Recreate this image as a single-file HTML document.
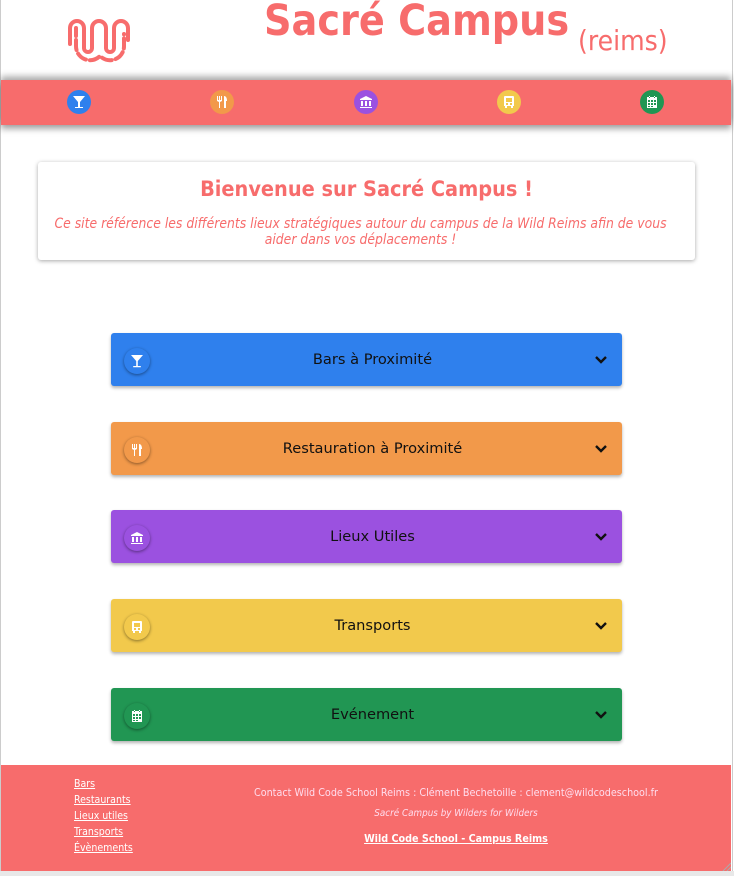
<!DOCTYPE html>
<html><head><meta charset="utf-8">
<style>
html,body{margin:0;padding:0;}
body{width:734px;height:876px;background:#fff;font-family:"DejaVu Sans","Liberation Sans",sans-serif;position:relative;overflow:hidden;}
.frame{position:absolute;left:0;top:0;width:731px;height:871px;border-left:1px solid #ccc;border-right:1px solid #ccc;}
.bottom{position:absolute;left:0;top:871px;width:734px;height:5px;background:#e8e8e8;}
.title{position:absolute;left:264px;top:-3px;font-size:42.5px;font-weight:bold;color:#f76c6c;font-stretch:condensed;white-space:nowrap;}
.reims{position:absolute;left:578px;top:24px;font-size:28px;color:#f76c6c;font-stretch:condensed;}
.nav{position:absolute;left:1px;top:80px;width:730px;height:45px;background:#f76c6c;box-shadow:0 -4px 6px rgba(0,0,0,.3),0 4px 6px rgba(0,0,0,.35);}
.ni{position:absolute;top:10px;width:24px;height:24px;border-radius:50%;}
.ni svg{position:absolute;left:5px;top:5px;}
.card{position:absolute;left:38px;top:162px;width:657px;height:98px;background:#fff;border-radius:3px;box-shadow:0 1px 4px rgba(0,0,0,.35);text-align:center;color:#f76c6c;font-stretch:condensed;}
.card h1{margin:15px 0 0;font-size:21.5px;font-weight:bold;}
.card p{margin:14px 0 0;padding-right:12px;font-size:13.8px;font-style:italic;line-height:16px;}
.acc{position:absolute;left:111px;width:499px;padding-left:12px;height:53px;border-radius:3px;box-shadow:0 2px 3px rgba(0,0,0,.3);font-size:14.6px;color:#111;text-align:center;line-height:54px;}
.acc .ic{position:absolute;left:13px;top:15px;width:26px;height:26px;border-radius:50%;box-shadow:0 1px 3px rgba(0,0,0,.45);}
.acc .ic svg{position:absolute;left:6px;top:6px;}
.acc .chev{position:absolute;right:14px;top:22px;}
.footer{position:absolute;left:1px;top:765px;width:730px;height:106px;background:#f76c6c;color:#fff;font-stretch:condensed;}
.links{position:absolute;left:73px;top:11px;font-size:10.5px;line-height:16px;}
.links a{color:#fff;text-decoration:underline;display:block;}
.fc{position:absolute;left:200px;width:510px;text-align:center;}
</style></head><body>
<div class="frame"></div>
<div class="bottom"></div>
<svg style="position:absolute;left:66px;top:14px" width="68" height="50" viewBox="0 0 68 50" fill="none" stroke="#f76c6c" stroke-width="4" stroke-linecap="round">
<path d="M4 30 V14 a7 7 0 0 1 14 0 V34 a4 4 0 0 0 8 0 V14 a7 7 0 0 1 14 0 V34 a4 4 0 0 0 8 0 V14 a7 7 0 0 1 14 0 V26"/>
<path d="M10 22 V14 M10 26 V32 a14 14 0 0 0 24 10 a14 14 0 0 0 24 -10 V20" stroke-dasharray="10 4"/>
</svg>
<div class="title">Sacré Campus</div>
<div class="reims">(reims)</div>
<div class="nav">
<div class="ni" style="left:66px;background:#2f80ed"><svg width="14" height="14" viewBox="0 0 14 14" fill="#fff"><path d="M1 1h12L8 7v5h3v1H3v-1h3V7z"/></svg></div>
<div class="ni" style="left:209px;background:#f2994a"><svg width="14" height="14" viewBox="0 0 14 14" fill="#fff"><path d="M2 1h1v4h1V1h1v4h1V1h1v5l-2 1v6H4V7L2 6zM9 1c2 0 3 2 3 5h-1v7H9z"/></svg></div>
<div class="ni" style="left:353px;background:#9b51e0"><svg width="14" height="14" viewBox="0 0 14 14" fill="#fff"><path d="M7 1l6 3v1H1V4zM2 6h2v5H2zM6 6h2v5H6zM10 6h2v5h-2zM1 12h12v1H1z"/></svg></div>
<div class="ni" style="left:496px;background:#f2c94c"><svg width="14" height="14" viewBox="0 0 14 14" fill="#fff"><path d="M3 1h8a1 1 0 0 1 1 1v9h-1v2H9v-2H5v2H3v-2H2V2a1 1 0 0 1 1-1zM4 3v4h6V3zM4 8v2h2V8zM8 8v2h2V8z" fill-rule="evenodd"/></svg></div>
<div class="ni" style="left:639px;background:#219653"><svg width="14" height="14" viewBox="0 0 14 14" fill="#fff"><path d="M2 2h10v11H2zM4 1h1v2H4zM9 1h1v2H9zM3 5v2h2V5zm3 0v2h2V5zm3 0v2h2V5zM3 8v2h2V8zm3 0v2h2V8zm3 0v2h2V8zM3 11v1h2v-1zm3 0v1h2v-1z" fill-rule="evenodd"/></svg></div>
</div>
<div class="card">
<h1>Bienvenue sur Sacré Campus !</h1>
<p>Ce site référence les différents lieux stratégiques autour du campus de la Wild Reims afin de vous<br>aider dans vos déplacements !</p>
</div>

<div class="acc" style="top:333px;background:#2f80ed"><div class="ic" style="background:#2f80ed"><svg width="14" height="14" viewBox="0 0 14 14" fill="#fff"><path d="M1 1h12L7.8 7v5h3v1.2H3.2V12h3V7z"/></svg></div>Bars à Proximité<svg class="chev" width="14" height="9" viewBox="0 0 14 9"><path d="M2 2l5 5 5-5" stroke="#111" stroke-width="2.4" fill="none"/></svg></div>
<div class="acc" style="top:422px;background:#f2994a"><div class="ic" style="background:#f2994a"><svg width="14" height="14" viewBox="0 0 14 14" fill="#fff"><path d="M2 1h1v4h1V1h1v4h1V1h1v5l-2 1v6H4V7L2 6zM9 1c2 0 3 2 3 5h-1v7H9z"/></svg></div>Restauration à Proximité<svg class="chev" width="14" height="9" viewBox="0 0 14 9"><path d="M2 2l5 5 5-5" stroke="#111" stroke-width="2.4" fill="none"/></svg></div>
<div class="acc" style="top:510px;background:#9b51e0"><div class="ic" style="background:#9b51e0"><svg width="14" height="14" viewBox="0 0 14 14" fill="#fff"><path d="M7 1l6 3v1H1V4zM2 6h2v5H2zM6 6h2v5H6zM10 6h2v5h-2zM1 12h12v1H1z"/></svg></div>Lieux Utiles<svg class="chev" width="14" height="9" viewBox="0 0 14 9"><path d="M2 2l5 5 5-5" stroke="#111" stroke-width="2.4" fill="none"/></svg></div>
<div class="acc" style="top:599px;background:#f2c94c"><div class="ic" style="background:#f2c94c"><svg width="14" height="14" viewBox="0 0 14 14" fill="#fff"><path d="M3 1h8a1 1 0 0 1 1 1v9h-1v2H9v-2H5v2H3v-2H2V2a1 1 0 0 1 1-1zM4 3v4h6V3zM4 8v2h2V8zM8 8v2h2V8z" fill-rule="evenodd"/></svg></div>Transports<svg class="chev" width="14" height="9" viewBox="0 0 14 9"><path d="M2 2l5 5 5-5" stroke="#111" stroke-width="2.4" fill="none"/></svg></div>
<div class="acc" style="top:688px;background:#219653"><div class="ic" style="background:#219653"><svg width="14" height="14" viewBox="0 0 14 14" fill="#fff"><path d="M2 2h10v11H2zM4 1h1v2H4zM9 1h1v2H9zM3 5v2h2V5zm3 0v2h2V5zm3 0v2h2V5zM3 8v2h2V8zm3 0v2h2V8zm3 0v2h2V8zM3 11v1h2v-1zm3 0v1h2v-1z" fill-rule="evenodd"/></svg></div>Evénement<svg class="chev" width="14" height="9" viewBox="0 0 14 9"><path d="M2 2l5 5 5-5" stroke="#111" stroke-width="2.4" fill="none"/></svg></div>

<div class="footer">
<div class="links"><a>Bars</a><a>Restaurants</a><a>Lieux utiles</a><a>Transports</a><a>Évènements</a></div>
<div class="fc" style="top:21px;font-size:10.7px;color:#fde">Contact Wild Code School Reims : Clément Bechetoille : clement@wildcodeschool.fr</div>
<div class="fc" style="top:43px;font-size:9.8px;font-style:italic;color:#fde">Sacré Campus by Wilders for Wilders</div>
<div class="fc" style="top:67px;font-size:10.7px;font-weight:bold;text-decoration:underline">Wild Code School - Campus Reims</div>
<svg style="position:absolute;right:0;bottom:0" width="10" height="10"><path d="M10 2L2 10M10 6L6 10" stroke="#aaa" stroke-width="1"/></svg>
</div>
</body></html>
